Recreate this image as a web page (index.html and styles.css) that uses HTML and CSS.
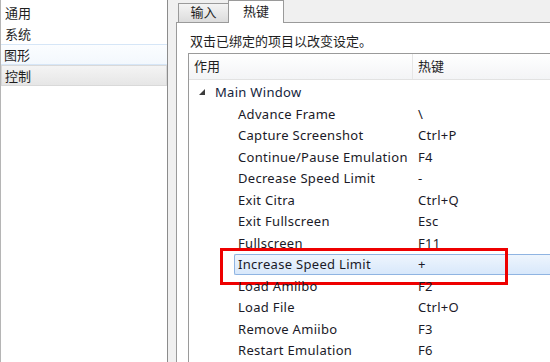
FILE: index.html
```html
<!DOCTYPE html>
<html>
<head>
<meta charset="utf-8">
<link rel="stylesheet" href="styles.css">
</head>
<body>
<div class="app">
  <ul class="side">
    <li class="side-item">通用</li>
    <li class="side-item">系统</li>
    <li class="side-item hover">图形</li>
    <li class="side-item selected">控制</li>
  </ul>
  <div class="main">
    <div class="tabs">
      <div class="tab">输入</div>
      <div class="tab active">热键</div>
    </div>
    <div class="pane">
      <p class="hint">双击已绑定的项目以改变设定。</p>
      <div class="tree">
        <div class="header">
          <div class="hcol first">作用</div>
          <div class="hcol">热键</div>
        </div>
        <div class="group">
          <svg class="arrow" width="8" height="8" viewBox="0 0 8 8"><polygon points="7,1 7,7 1,7" fill="#3c3c3c"/></svg>
          <span>Main Window</span>
        </div>
        <div class="row"><span class="name">Advance Frame</span><span class="key">\</span></div>
        <div class="row"><span class="name">Capture Screenshot</span><span class="key">Ctrl+P</span></div>
        <div class="row"><span class="name">Continue/Pause Emulation</span><span class="key">F4</span></div>
        <div class="row"><span class="name">Decrease Speed Limit</span><span class="key">-</span></div>
        <div class="row"><span class="name">Exit Citra</span><span class="key">Ctrl+Q</span></div>
        <div class="row"><span class="name">Exit Fullscreen</span><span class="key">Esc</span></div>
        <div class="row"><span class="name">Fullscreen</span><span class="key">F11</span></div>
        <div class="row sel"><span class="name">Increase Speed Limit</span><span class="key">+</span><div class="redbox"></div></div>
        <div class="row"><span class="name">Load Amiibo</span><span class="key">F2</span></div>
        <div class="row"><span class="name">Load File</span><span class="key">Ctrl+O</span></div>
        <div class="row"><span class="name">Remove Amiibo</span><span class="key">F3</span></div>
        <div class="row"><span class="name">Restart Emulation</span><span class="key">F6</span></div>
      </div>
    </div>
  </div>
</div>
</body>
</html>
```
FILE: styles.css
```css
html, body {
  margin: 0;
  padding: 0;
  width: 550px;
  height: 362px;
  overflow: hidden;
  background: #f0f0f0;
  font-family: "Noto Sans", "Noto Sans CJK SC", sans-serif;
  font-size: 13px;
  color: #1e1e1e;
}
.app {
  display: flex;
  height: 362px;
}
.side {
  list-style: none;
  margin: 0;
  padding: 2px 0 0 0;
  width: 166px;
  background: #fff;
  border-left: 1px solid #b5b5b5;
  border-right: 1px solid #8c8c8c;
  flex: none;
}
.side-item {
  height: 21px;
  line-height: 20px;
  padding-left: 3px;
  box-sizing: border-box;
  border: 1px solid transparent;
}
.side-item.hover {
  background: linear-gradient(#fbfdff, #f3f8fd);
  border-color: #d6e6f7;
  border-left: none;
  border-right: none;
}
.side-item.selected {
  background: linear-gradient(#f4f4f4, #e6e6e6);
  border-color: #d9d9d9;
}
.main {
  margin-left: 8px;
  flex: 1;
  display: flex;
  flex-direction: column;
  min-width: 0;
}
.tabs {
  display: flex;
  align-items: flex-end;
  height: 22px;
  padding-left: 2px;
  position: relative;
  z-index: 1;
  flex: none;
}
.tab {
  height: 18px;
  line-height: 17px;
  width: 49px;
  text-align: center;
  border: 1px solid #9a9a9a;
  border-bottom: none;
  background: linear-gradient(#f4f4f4, #dcdcdc);
  box-sizing: content-box;
}
.tab.active {
  height: 22px;
  line-height: 20px;
  width: 54px;
  margin-left: -1px;
  background: #fff;
  margin-bottom: -1px;
}
.pane {
  flex: 1;
  min-height: 0;
  display: flex;
  flex-direction: column;
  background: #fff;
  border-left: 1px solid #9a9a9a;
  border-top: 1px solid #9a9a9a;
  padding: 8px 0 0 11px;
}
.hint {
  margin: 0 0 2px 2px;
  line-height: 20px;
}
.tree {
  flex: 1;
  min-height: 0;
  overflow: hidden;
  border-left: 1px solid #9a9a9a;
  border-top: 1px solid #9a9a9a;
  position: relative;
}
.header {
  display: flex;
  height: 25px;
  background: linear-gradient(#ffffff, #f3f4f6);
  border-bottom: 1px solid #e2e2e2;
}
.hcol {
  line-height: 25px;
  padding-left: 5px;
}
.hcol.first {
  width: 218px;
  border-right: 1px solid #e6e6e6;
}
.group {
  display: flex;
  align-items: center;
  height: 22px;
  margin-top: 1px;
  padding-left: 9px;
  color: #14243c;
  letter-spacing: 0.3px;
}
.arrow {
  margin-right: 9px;
}
.row {
  display: flex;
  align-items: center;
  height: 21.5px;
  padding-left: 49px;
  color: #1a1a28;
  position: relative;
  letter-spacing: 0.3px;
}
.name {
  width: 180px;
  flex: none;
}
.row.sel {
  background: linear-gradient(#eef5fd, #d8e8fb);
  border: 1px solid #8fb4e2;
  border-right: none;
  border-radius: 2px 0 0 2px;
  margin-left: 45px;
  padding-left: 3px;
  box-sizing: border-box;
}
.redbox {
  position: absolute;
  left: -15px;
  top: -7px;
  width: 288px;
  height: 37px;
  border: 3px solid #ee0000;
  box-sizing: border-box;
}
```
